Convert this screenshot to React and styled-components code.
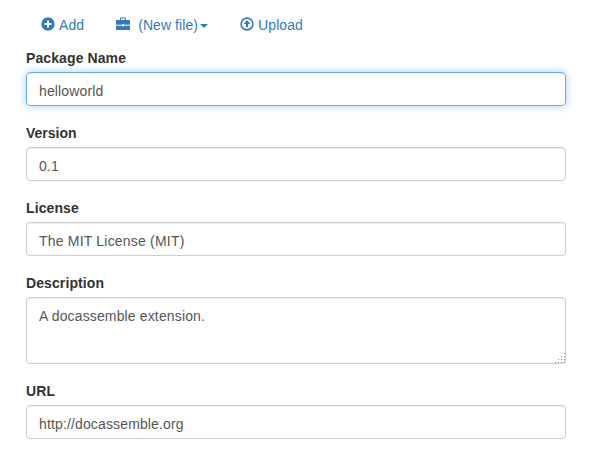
import React from 'react';
import styled, { createGlobalStyle } from 'styled-components';

const GlobalStyle = createGlobalStyle`
  * { box-sizing: border-box; }
  body {
    margin: 0;
    background: #fff;
    color: #333;
    font: 14px/20px "Liberation Sans", Arial, sans-serif;
    overflow: hidden;
  }
`;

const Page = styled.main`
  padding: 5px 24px 0 26px;
`;

const Toolbar = styled.nav`
  display: flex;
  height: 40px;
  margin-bottom: 3px;
  padding-left: 15px;
  gap: 32px;
`;

const ToolLink = styled.a`
  display: flex;
  align-items: center;
  height: 40px;
  color: #337ab7;
  text-decoration: none;
  white-space: pre;
  letter-spacing: 0.08px;
  cursor: pointer;
`;

const Glyph = styled.svg`
  width: 14px;
  height: 14px;
  margin-top: -2px;
  margin-right: ${(p) => p.$gap || '4px'};
  fill: currentColor;
`;

const Caret = styled.span`
  margin-top: 2px;
  margin-left: 2px;
  border-top: 4px solid;
  border-right: 4px solid transparent;
  border-left: 4px solid transparent;
`;

const Field = styled.div`
  display: flex;
  flex-direction: column;
  margin-bottom: 17px;
`;

const Label = styled.label`
  height: 20px;
  margin-bottom: 4px;
  font-weight: 700;
  letter-spacing: ${(p) => p.$tracking || '0.1px'};
`;

const Input = styled.input`
  width: 100%;
  height: 34px;
  padding: 8px 12px 4px;
  border: 1px solid ${(p) => (p.$active ? '#66afe9' : '#ccc')};
  border-radius: 4px;
  outline: 0;
  background: #fff;
  color: #555;
  font: inherit;
  letter-spacing: ${(p) => p.$tracking || '0.14px'};
  box-shadow: inset 0 1px 1px rgba(0, 0, 0, 0.075)
    ${(p) => (p.$active ? ', 0 0 8px rgba(102, 175, 233, 0.6)' : '')};
`;

const TextAreaFrame = styled.div`
  position: relative;
  height: 67px;
`;

const TextArea = styled(Input).attrs({ as: 'textarea' })`
  display: block;
  height: 67px;
  resize: none;
`;

const Grip = styled.svg`
  position: absolute;
  right: 1px;
  bottom: 1px;
  width: 10px;
  height: 10px;
  fill: #888;
  pointer-events: none;
`;

const fields = [
  { id: 'name', label: 'Package Name', value: 'helloworld', active: true },
  { id: 'version', label: 'Version', value: '0.1', labelTracking: '0px' },
  { id: 'license', label: 'License', value: 'The MIT License (MIT)', tracking: '0.2px' },
  { id: 'description', label: 'Description', value: 'A docassemble extension.', multiline: true },
  { id: 'url', label: 'URL', value: 'http://docassemble.org' },
];

export default function App() {
  return (
    <>
      <GlobalStyle />
      <Page>
        <Toolbar>
          <ToolLink>
            <Glyph viewBox="0 0 14 14">
              <path fillRule="evenodd" d="M7 .3a6.7 6.7 0 1 0 0 13.4A6.7 6.7 0 0 0 7 .3ZM6 3.5h2V6h2.5v2H8v2.5H6V8H3.5V6H6Z" />
            </Glyph>
            Add
          </ToolLink>
          <ToolLink>
            <Glyph viewBox="0 0 14 14" $gap="8px">
              <path fillRule="evenodd" d="M4 3V1.5Q4 .4 5 .4h4q1 0 1 1.1V3h3q1 0 1 1v3.8H8V7H6v.8H0V4q0-1 1-1ZM5 3h4V1.4H5ZM0 8.7h6v.8h2v-.8h6V12q0 1-1 1H1q-1 0-1-1Z" />
            </Glyph>
            (New file)
            <Caret />
          </ToolLink>
          <ToolLink>
            <Glyph viewBox="0 0 14 14">
              <path fillRule="evenodd" d="M7 .3a6.7 6.7 0 1 0 0 13.4A6.7 6.7 0 0 0 7 .3ZM7 1.9a5.1 5.1 0 1 1 0 10.2A5.1 5.1 0 0 1 7 1.9Z" />
              <path d="M7 3l3.3 4H8v3.2H6V7H3.7Z" />
            </Glyph>
            Upload
          </ToolLink>
        </Toolbar>
        {fields.map(({ id, label, value, active, multiline, tracking, labelTracking }) => (
          <Field key={id}>
            <Label htmlFor={id} $tracking={labelTracking}>{label}</Label>
            {multiline ? (
              <TextAreaFrame>
                <TextArea id={id} defaultValue={value} />
                <Grip viewBox="0 0 10 10" shapeRendering="crispEdges">
                  <path d="M9 0h1v1H9zM6 3h1v1H6zM9 3h1v1H9zM3 6h1v1H3zM6 6h1v1H6zM9 6h1v1H9zM0 9h1v1H0zM3 9h1v1H3zM6 9h1v1H6zM9 9h1v1H9z" />
                </Grip>
              </TextAreaFrame>
            ) : (
              <Input id={id} defaultValue={value} $active={active} $tracking={tracking} />
            )}
          </Field>
        ))}
      </Page>
    </>
  );
}
